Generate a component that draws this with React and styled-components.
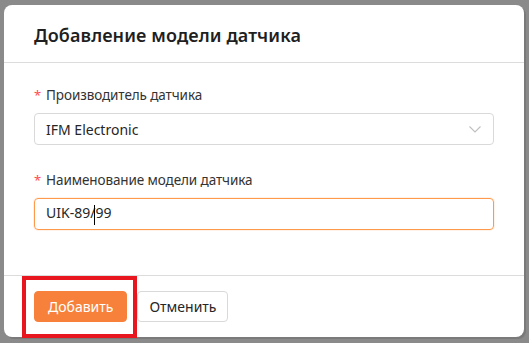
import React from 'react';
import styled, { createGlobalStyle } from 'styled-components';

const GlobalStyle = createGlobalStyle`
  html, body {
    margin: 0;
    padding: 0;
    background: #8a8a8a;
  }
  body {
    font-family: 'Noto Sans', 'Open Sans', sans-serif;
    color: #262626;
  }
`;

const Backdrop = styled.div`
  width: 529px;
  height: 343px;
  padding: 5px 5px 0 4px;
  box-sizing: border-box;
  background: #8a8a8a;
  position: relative;
  overflow: hidden;
`;

const Modal = styled.div`
  width: 520px;
  height: 332px;
  background: #fff;
  border-radius: 8px;
  display: flex;
  flex-direction: column;
  box-shadow: 2px 2px 0 #7a7a7a;
`;

const Header = styled.header`
  height: 58px;
  padding: 2px 30px 0;
  box-sizing: border-box;
  display: flex;
  align-items: center;
  border-bottom: 1px solid #dcdcdc;
`;

const Title = styled.h1`
  margin: 0;
  font-size: 18px;
  font-weight: 600;
  color: #1f1f1f;
  letter-spacing: 0.1px;
`;

const Body = styled.div`
  flex: 1;
  padding: 22px 30px 0;
  display: flex;
  flex-direction: column;
`;

const Field = styled.div`
  display: flex;
  flex-direction: column;
  margin-bottom: 25px;
`;

const Label = styled.label`
  font-size: 13.5px;
  color: #333;
  line-height: 20px;
  margin-bottom: 8px;
  letter-spacing: -0.1px;
  &::before {
    content: '*';
    color: #ff4d4f;
    margin-right: 5px;
    font-size: 13px;
  }
`;

const Control = styled.div`
  height: 32px;
  box-sizing: border-box;
  border: 1px solid ${({ focused }) => (focused ? '#ff9a4d' : '#d9d9d9')};
  box-shadow: ${({ focused }) => (focused ? '0 0 0 1px rgba(255, 154, 77, 0.12)' : 'none')};
  border-radius: 4px;
  padding: 0 11px;
  display: flex;
  align-items: center;
  justify-content: space-between;
  font-size: 14px;
  color: #262626;
`;

const Caret = styled.span`
  display: inline-block;
  width: 1px;
  height: 20px;
  background: #000;
  margin: 0 0 0 -1px;
  vertical-align: middle;
`;

const Chevron = () => (
  <svg width="14" height="14" viewBox="0 0 14 14" fill="none">
    <path d="M1.5 4.5 L7 10 L12.5 4.5" stroke="#bfbfbf" strokeWidth="1.1" />
  </svg>
);

const Footer = styled.footer`
  height: 61px;
  border-top: 1px solid #dcdcdc;
  padding: 0 30px;
  display: flex;
  align-items: center;
  gap: 10px;
`;

const Button = styled.button`
  height: 31px;
  box-sizing: border-box;
  padding: 0 ${({ primary }) => (primary ? '13px' : '11px')};
  border-radius: 4px;
  font-family: inherit;
  font-size: 14px;
  border: 1px solid ${({ primary }) => (primary ? '#f7813a' : '#d9d9d9')};
  background: ${({ primary }) => (primary ? '#f7813a' : '#fff')};
  color: ${({ primary }) => (primary ? '#fff' : '#262626')};
  cursor: pointer;
`;

const Highlight = styled.div`
  position: absolute;
  left: 22px;
  top: 276px;
  width: 115px;
  height: 62px;
  box-sizing: border-box;
  border: 4px solid #e8161f;
  pointer-events: none;
`;

const App = () => (
  <>
    <GlobalStyle />
    <Backdrop>
      <Modal>
        <Header>
          <Title>Добавление модели датчика</Title>
        </Header>
        <Body>
          <Field>
            <Label>Производитель датчика</Label>
            <Control>
              <span>IFM Electronic</span>
              <Chevron />
            </Control>
          </Field>
          <Field>
            <Label>Наименование модели датчика</Label>
            <Control focused>
              <span>
                UIK-89/<Caret />99
              </span>
            </Control>
          </Field>
        </Body>
        <Footer>
          <Button primary>Добавить</Button>
          <Button>Отменить</Button>
        </Footer>
      </Modal>
      <Highlight />
    </Backdrop>
  </>
);

export default App;
